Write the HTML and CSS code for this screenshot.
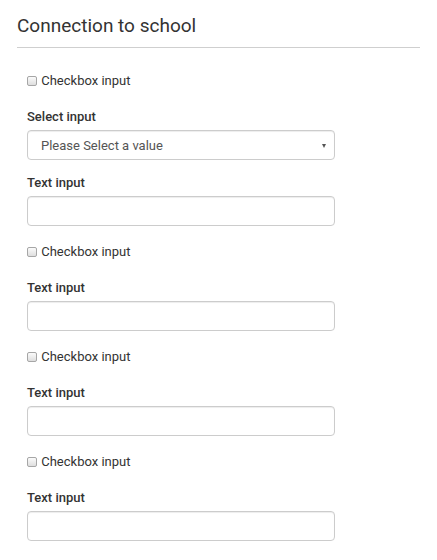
FILE: index.html
```html
<!DOCTYPE html>
<html>
<head>
  <meta name="viewport" content="width=device-width, initial-scale=1">
  <link rel="stylesheet" href="styles.css">
</head>
<body>
  <div class="panel">
    <h3 class="panel-title">Connection to school</h3>

    <form class="form">
      <div class="checkbox">
        <label><input type="checkbox"> Checkbox input</label>
      </div>

      <div class="form-group">
        <label class="control-label">Select input</label>
        <div class="select-wrap">
          <select class="form-control">
            <option>Please Select a value</option>
          </select>
        </div>
      </div>

      <div class="form-group">
        <label class="control-label">Text input</label>
        <input type="text" class="form-control">
      </div>

      <div class="checkbox">
        <label><input type="checkbox"> Checkbox input</label>
      </div>

      <div class="form-group">
        <label class="control-label">Text input</label>
        <input type="text" class="form-control">
      </div>

      <div class="checkbox">
        <label><input type="checkbox"> Checkbox input</label>
      </div>

      <div class="form-group">
        <label class="control-label">Text input</label>
        <input type="text" class="form-control">
      </div>

      <div class="checkbox">
        <label><input type="checkbox"> Checkbox input</label>
      </div>

      <div class="form-group">
        <label class="control-label">Text input</label>
        <input type="text" class="form-control">
      </div>
    </form>
  </div>
</body>
</html>
```

FILE: styles.css
```css
body {
  margin: 0;
  padding: 0;
  background-color: #fff;
  color: #333;
  font-family: Roboto, "Liberation Sans", Arial, sans-serif;
  font-size: 13px;
  line-height: 18px;
}
.panel {
  padding: 0 17px;
}
.panel-title {
  margin: 0;
  padding: 16px 0 11px;
  font-size: 19px;
  font-weight: 400;
  line-height: 20px;
  color: #333;
  border-bottom: 1px solid #cfcfcf;
}
.form {
  padding: 7px 10px 0;
}
.form-group {
  margin-bottom: 14px;
}
.control-label {
  display: block;
  margin-bottom: 4px;
  font-weight: 500;
}
.checkbox {
  margin: 17px 0 18px;
}
.checkbox label {
  font-weight: 400;
  cursor: pointer;
}
.checkbox input {
  -webkit-appearance: none;
  appearance: none;
  width: 10px;
  height: 10px;
  margin: 0 1px 0 0;
  vertical-align: -1px;
  border: 1px solid #a6a6a6;
  border-radius: 2px;
  background: linear-gradient(#fbfbfb, #dedede);
}
.form-control {
  display: block;
  box-sizing: border-box;
  width: 308px;
  height: 30px;
  margin: 0;
  padding: 0 13px;
  font-family: inherit;
  font-size: 13px;
  color: #555;
  background-color: #fff;
  border: 1px solid #ccc;
  border-radius: 4px;
  box-shadow: inset 0 1px 1px rgba(0,0,0,0.075);
  outline: none;
}
.select-wrap {
  position: relative;
  width: 308px;
}
select.form-control {
  -webkit-appearance: none;
  appearance: none;
}
.select-wrap::after {
  content: "";
  position: absolute;
  top: 14px;
  right: 9px;
  border-left: 2.5px solid transparent;
  border-right: 2.5px solid transparent;
  border-top: 4px solid #555;
  pointer-events: none;
}
```
